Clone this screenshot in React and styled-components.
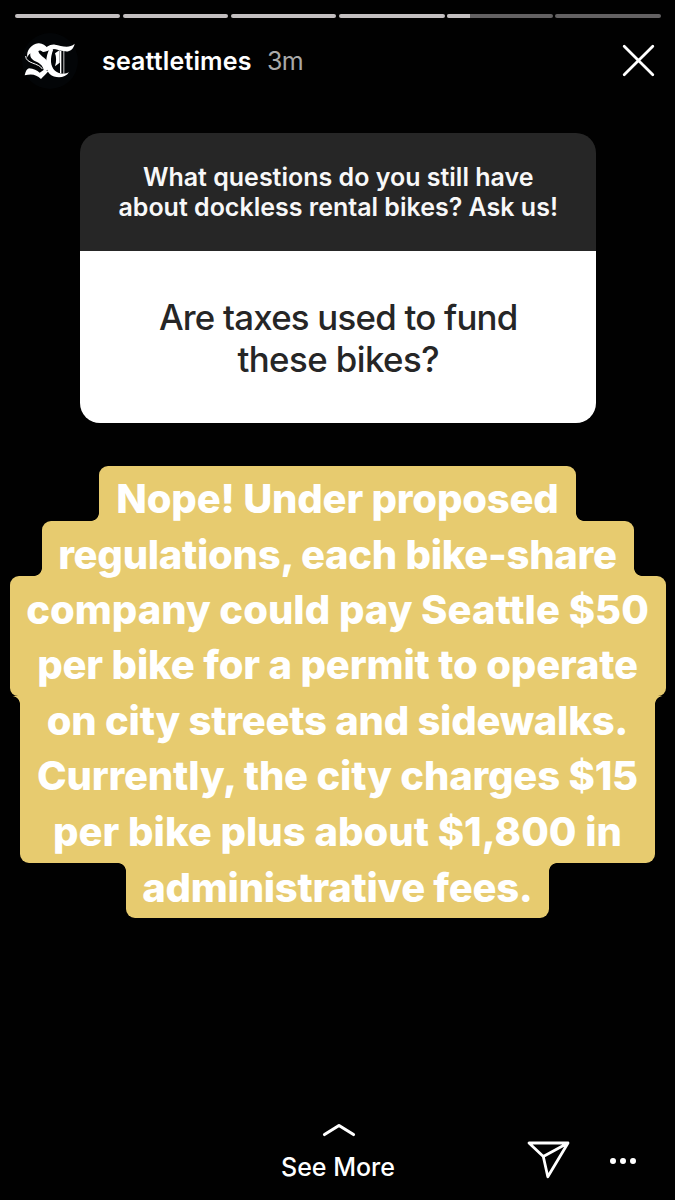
import React from "react";
import styled, { createGlobalStyle, css } from "styled-components";

const GlobalStyle = createGlobalStyle`
  * { box-sizing: border-box; }
  body {
    margin: 0;
    background: #010101;
    font-family: Inter, "Liberation Sans", sans-serif;
  }
`;

const Story = styled.main`
  display: flex;
  flex-direction: column;
  width: 675px;
  height: 1200px;
  overflow: hidden;
  background: #010101;
  color: #fff;
`;

const ProgressRow = styled.div`
  display: flex;
  gap: 2.6px;
  padding: 14px 14px 0 14.5px;
`;

const ProgressTrack = styled.div`
  flex: 1;
  height: 4px;
  border-radius: 2px;
  overflow: hidden;
  background: #636162;
`;

const ProgressFill = styled.div`
  width: ${(p) => p.$value}%;
  height: 100%;
  background: #c3bfc0;
`;

const Header = styled.header`
  display: flex;
  align-items: center;
  height: 60px;
  margin-top: 13px;
  padding: 0 19px 0 22px;
`;

const Avatar = styled.div`
  display: flex;
  align-items: center;
  justify-content: center;
  flex: none;
  width: 56px;
  height: 56px;
  border-radius: 50%;
  background: #030507;
`;

const MonogramSvg = styled.svg`
  flex: none;
  margin: 0 2px 1px 0;
`;

const Username = styled.span`
  margin-left: 24px;
  font-size: 25px;
  font-weight: 600;
  line-height: 30px;
  letter-spacing: 0.15px;
`;

const Age = styled.span`
  margin-left: 15.5px;
  font-size: 25px;
  line-height: 30px;
  letter-spacing: -0.7px;
  color: #a9a9a9;
`;

const CloseButton = styled.button`
  display: flex;
  margin: 0 0 1px auto;
  padding: 0;
  border: 0;
  background: none;
  color: #fff;
`;

const QuestionCard = styled.section`
  width: 516px;
  margin: 42px 0 0 80.2px;
  border-radius: 20px;
  overflow: hidden;
  text-align: center;
`;

const Prompt = styled.div`
  height: 118px;
  padding-top: 29px;
  background: #262626;
  color: #f8f8f8;
  font-size: 25px;
  font-weight: 600;
  line-height: 30px;
`;

const Question = styled.div`
  height: 172px;
  padding-top: 44.5px;
  background: #fff;
  color: #262626;
  font-size: 34.8px;
  font-weight: 500;
  line-height: 42px;
`;

const TextLine = styled.div`
  white-space: nowrap;
  letter-spacing: ${(p) => p.$tracking || 0}px;
`;

const Answer = styled.section`
  display: flex;
  flex-direction: column;
  align-items: center;
  width: 675px;
  margin-top: 43px;
  font-size: 40px;
  font-weight: 800;
  line-height: 55.6px;
`;

/* Keeps descenders above the block that follows. */
const AnswerLine = styled(TextLine)`
  position: relative;
  z-index: 1;
`;

const notch = css`
  content: "";
  position: absolute;
  width: 8px;
  height: 8px;
  ${(p) => (p.$join === "below" ? "bottom: 0;" : "top: 0;")}
`;

const AnswerBlock = styled.div`
  position: relative;
  display: flex;
  flex-direction: column;
  align-items: center;
  width: ${(p) => p.$width}px;
  height: ${(p) => p.$height}px;
  border-radius: ${(p) => p.$corners};
  background: #e7cb6f;

  & > :first-child {
    margin-top: ${(p) => p.$offset}px;
  }

  ${(p) =>
    p.$join &&
    css`
      &::before {
        ${notch}
        right: 100%;
        background: radial-gradient(
          circle at 0 ${p.$join === "below" ? "0" : "100%"},
          transparent 7.5px,
          #e7cb6f 8.2px
        );
      }
      &::after {
        ${notch}
        left: 100%;
        background: radial-gradient(
          circle at 100% ${p.$join === "below" ? "0" : "100%"},
          transparent 7.5px,
          #e7cb6f 8.2px
        );
      }
    `}
`;

const Footer = styled.footer`
  display: flex;
  align-items: flex-end;
  margin-top: auto;
  height: 80px;
  padding: 0 39px 18px 281px;
`;

const SeeMore = styled.div`
  display: flex;
  flex-direction: column;
  align-items: center;
  width: 114px;
  font-size: 25px;
  font-weight: 500;
  line-height: 30px;
`;

const Chevron = styled.svg`
  margin: 0 0 15px 1.5px;
`;

const SendIcon = styled.svg`
  margin: 0 0 2px 130px;
`;

const MoreDots = styled.div`
  display: flex;
  gap: 4.2px;
  margin: 0 0 18.5px auto;
`;

const Dot = styled.span`
  width: 5.8px;
  height: 5.8px;
  border-radius: 50%;
  background: #fff;
`;

const progress = [100, 100, 100, 100, 22, 0];

const answerBlocks = [
  { width: 477, height: 55, offset: 5, corners: "9px 9px 0 0", join: "below", lines: [["Nope! Under proposed", -0.2]] },
  { width: 592, height: 55, offset: 5.5, corners: "9px 9px 0 0", join: "below", lines: [["regulations, each bike-share", -0.28]] },
  {
    width: 656,
    height: 120,
    offset: 5.5,
    corners: "9px 9px 8px 8px",
    lines: [["company could pay Seattle $50", 0], ["per bike for a permit to operate", -0.16]],
  },
  {
    width: 635,
    height: 167,
    offset: -3.3,
    corners: "0 0 9px 9px",
    join: "above",
    lines: [
      ["on city streets and sidewalks.", -0.25],
      ["Currently, the city charges $15", -0.2],
      ["per bike plus about $1,800 in", 0],
    ],
  },
  { width: 423, height: 55, offset: -3.5, corners: "0 0 9px 9px", join: "above", lines: [["administrative fees.", -0.28]] },
];

function Monogram() {
  return (
    <MonogramSvg width="60" height="50" viewBox="0 0 180 150" fill="#fff">
      <path d="M25 64C21 44 38 24 58 22C70 21 79 28 86 36L72 48C66 43 60 42 58 46C60 54 68 60 76 66C88 75 92 88 86 100L76 112C74 96 70 86 54 78C40 72 32 66 34 52C30 55 27 59 25 64Z" />
      <path d="M17 118C20 106 24 98 30 97C44 98 54 104 62 110L74 102L88 106C80 116 72 122 66 129C52 116 40 112 17 118Z" />
      <path d="M70 48C80 34 92 24 108 26C126 28 148 40 167 23C163 42 150 48 138 46C120 44 106 36 98 40C90 44 80 48 70 48Z" />
      <path d="M92 38C80 58 76 98 92 114C108 128 138 128 150 109C136 117 118 112 108 104C94 92 92 68 103 40Z" />
      <path d="M108 52L122 42V80L108 91C113 76 112 62 108 52Z" />
      <path d="M20 60C20 84 60 80 70 99" fill="none" stroke="#fff" strokeWidth="3" />
      <path d="M125 44V112" fill="none" stroke="#fff" strokeWidth="4" />
      <path d="M134.5 44V114" fill="none" stroke="#fff" strokeWidth="2.4" />
    </MonogramSvg>
  );
}

export default function App() {
  return (
    <>
      <GlobalStyle />
      <Story>
        <ProgressRow>
          {progress.map((value, i) => (
            <ProgressTrack key={i}>
              <ProgressFill $value={value} />
            </ProgressTrack>
          ))}
        </ProgressRow>
        <Header>
          <Avatar>
            <Monogram />
          </Avatar>
          <Username>seattletimes</Username>
          <Age>3m</Age>
          <CloseButton aria-label="Close">
            <svg width="35" height="35" viewBox="0 0 35 35" stroke="currentColor" strokeWidth="2.8" strokeLinecap="round">
              <path d="M3.2 3.2L31.8 31.8M31.8 3.2L3.2 31.8" />
            </svg>
          </CloseButton>
        </Header>
        <QuestionCard>
          <Prompt>
            <TextLine>What questions do you still have</TextLine>
            <TextLine>about dockless rental bikes? Ask us!</TextLine>
          </Prompt>
          <Question>
            <TextLine $tracking={-0.76}>Are taxes used to fund</TextLine>
            <TextLine $tracking={-0.55}>these bikes?</TextLine>
          </Question>
        </QuestionCard>
        <Answer>
          {answerBlocks.map((b) => (
            <AnswerBlock key={b.width} $width={b.width} $height={b.height} $corners={b.corners} $join={b.join} $offset={b.offset}>
              {b.lines.map(([text, tracking]) => (
                <AnswerLine key={text} $tracking={tracking}>
                  {text}
                </AnswerLine>
              ))}
            </AnswerBlock>
          ))}
        </Answer>
        <Footer>
          <SeeMore>
            <Chevron width="34" height="14" viewBox="0 0 34 14" fill="none" stroke="#fff" strokeWidth="3.2" strokeLinecap="round" strokeLinejoin="round">
              <path d="M2.5 11.5L17 2.5L31.5 11.5" />
            </Chevron>
            <TextLine>See More</TextLine>
          </SeeMore>
          <SendIcon width="46" height="40" viewBox="0 0 46 40" fill="none" stroke="#fff" strokeWidth="2.8" strokeLinejoin="round">
            <path d="M4 3H43L22.8 36.8L18.3 16.5ZM18.3 16.5L43 3" />
          </SendIcon>
          <MoreDots>
            <Dot />
            <Dot />
            <Dot />
          </MoreDots>
        </Footer>
      </Story>
    </>
  );
}
